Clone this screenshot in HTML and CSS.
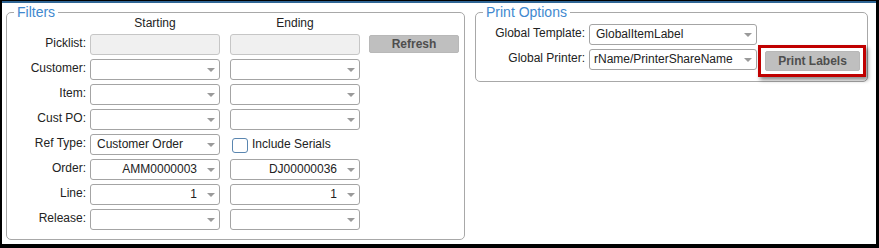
FILE: index.html
```html
<!DOCTYPE html>
<html>
<head>
<meta charset="utf-8">
<link rel="stylesheet" href="styles.css">
</head>
<body>
<div class="frame">
  <section class="panel filters">
    <span class="legend">Filters</span>
    <div class="filter-grid">
      <span></span><div class="colhead">Starting</div><div class="colhead">Ending</div><span></span>

      <label class="lbl">Picklist:</label>
      <div class="field disabled"></div>
      <div class="field disabled"></div>
      <button class="btn refresh">Refresh</button>

      <label class="lbl">Customer:</label>
      <div class="field select"></div>
      <div class="field select"></div>
      <span></span>

      <label class="lbl">Item:</label>
      <div class="field select"></div>
      <div class="field select"></div>
      <span></span>

      <label class="lbl">Cust PO:</label>
      <div class="field select"></div>
      <div class="field select"></div>
      <span></span>

      <label class="lbl">Ref Type:</label>
      <div class="field select">Customer Order</div>
      <div class="check"><span class="box"></span><span class="check-text">Include Serials</span></div>
      <span></span>

      <label class="lbl">Order:</label>
      <div class="field select right">AMM0000003</div>
      <div class="field select right">DJ00000036</div>
      <span></span>

      <label class="lbl">Line:</label>
      <div class="field select right">1</div>
      <div class="field select right">1</div>
      <span></span>

      <label class="lbl">Release:</label>
      <div class="field select"></div>
      <div class="field select"></div>
      <span></span>
    </div>
  </section>

  <section class="panel print">
    <span class="legend">Print Options</span>
    <div class="print-grid">
      <label class="lbl">Global Template:</label>
      <div class="field select wide">GlobalItemLabel</div>
      <span></span>

      <label class="lbl">Global Printer:</label>
      <div class="field select wide scrolled">rName/PrinterShareName</div>
      <div class="highlight"><button class="btn print-btn">Print Labels</button></div>
    </div>
  </section>
</div>
</body>
</html>
```

FILE: styles.css
```css
* { box-sizing: border-box; }

html, body {
  margin: 0;
  padding: 0;
  background: #000;
}

body {
  font-family: "Liberation Sans", Arial, sans-serif;
  font-size: 12px;
  color: #222;
}

.frame {
  margin: 1px 3px 4px 2px;
  height: 243px;
  border-top: 2px solid #2f6594;
  background: #fff;
  padding: 9px 0 0 4px;
  display: flex;
  align-items: flex-start;
  gap: 10px;
}

.panel {
  position: relative;
  border: 1px solid #a8a8a8;
  border-radius: 5px;
}

.legend {
  position: absolute;
  top: -9px;
  left: 7px;
  padding: 0 3px;
  background: #fff;
  color: #4189cf;
  font-size: 14px;
  line-height: 16px;
}

.filters {
  width: 459px;
  height: 228px;
  padding: 3px 0 0 0;
}

.filter-grid {
  display: grid;
  grid-template-columns: 83px 140px 139px 90px;
  grid-template-rows: 14px repeat(8, 21px);
  row-gap: 4px;
}

.colhead {
  width: 130px;
  text-align: center;
  line-height: 14px;
  color: #222;
}

.lbl {
  text-align: right;
  padding-right: 4px;
  padding-top: 2px;
  line-height: 14px;
  white-space: nowrap;
  color: #222;
}

.field {
  position: relative;
  width: 130px;
  height: 21px;
  border: 1px solid #a4a4a4;
  border-radius: 3px;
  background: #fff;
  line-height: 19px;
  padding: 0 22px 0 6px;
  white-space: nowrap;
  overflow: hidden;
  color: #222;
}

.field.disabled {
  background: #f0f0f0;
  border-color: #c6c6c6;
}

.field.right { text-align: right; }

.select::after {
  content: "";
  position: absolute;
  right: 4px;
  top: 8px;
  border-left: 4px solid transparent;
  border-right: 4px solid transparent;
  border-top: 4px solid #9a9a9a;
}

.check {
  display: flex;
  align-items: flex-start;
}

.check .box {
  width: 16px;
  height: 15px;
  margin: 4px 0 0 2px;
  border: 1px solid #5a86b0;
  border-radius: 3px;
  background: #fff;
}

.check-text {
  padding: 3px 0 0 4px;
  line-height: 14px;
  color: #222;
}

.btn {
  font-family: "Liberation Sans", Arial, sans-serif;
  font-size: 12px;
  font-weight: bold;
  color: #4e4e4e;
  background: #bfbfbf;
  border: 1px solid #b8b8b8;
  border-radius: 2px;
  padding: 0;
  margin: 0;
  cursor: default;
}

.refresh {
  width: 90px;
  height: 18px;
  margin-top: 1px;
  line-height: 16px;
}

.print {
  width: 393px;
  height: 70px;
  padding: 11px 0 0 0;
}

.print-grid {
  display: grid;
  grid-template-columns: 113px 169px auto;
  grid-template-rows: 21px 21px;
  row-gap: 4px;
}

.field.wide { width: 168px; }
.field.scrolled { padding-left: 4px; }

.highlight {
  width: 108px;
  height: 32px;
  margin: -4px 0 -7px 0;
  border: 3px solid #c00000;
  padding: 3px 3px 3px 4px;
  background: #fff;
  box-shadow: 2px 3px 4px rgba(0, 0, 0, 0.45);
}

.print-btn {
  width: 95px;
  height: 20px;
  line-height: 18px;
  display: block;
}
```
